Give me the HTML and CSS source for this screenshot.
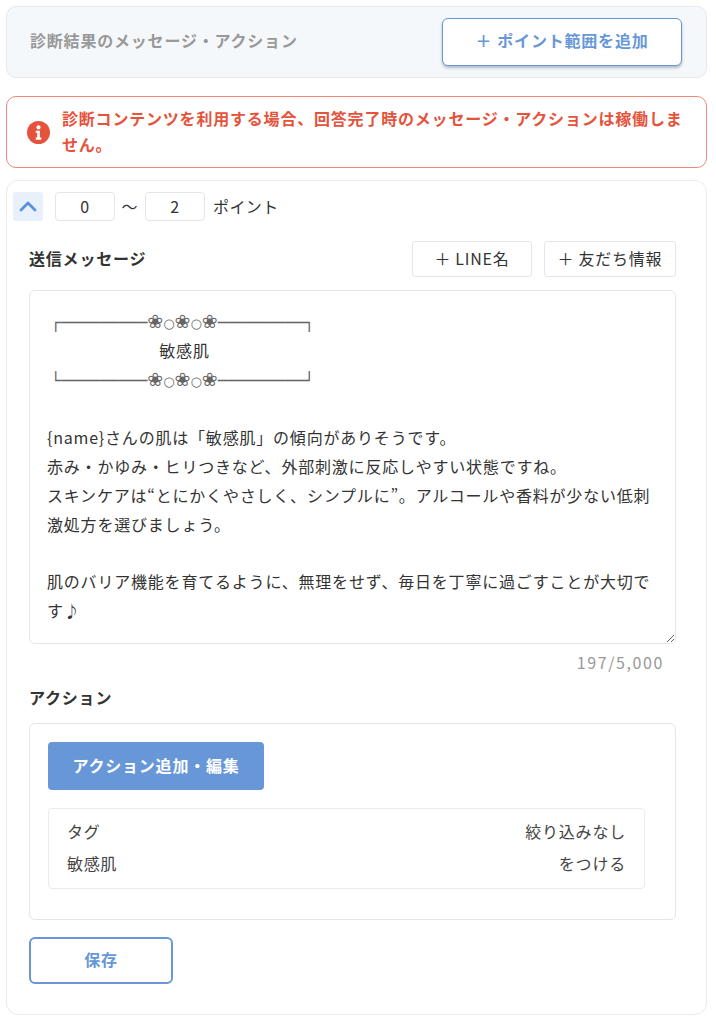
FILE: index.html
```html
<!DOCTYPE html>
<html lang="ja">
<head>
<meta charset="utf-8">
<title>診断結果のメッセージ・アクション</title>
<link rel="stylesheet" href="styles.css">
</head>
<body>
<main class="page">
  <section class="header">
    <h2 class="header-title">診断結果のメッセージ・アクション</h2>
    <button class="add-range" type="button"><span class="plus">＋</span>ポイント範囲を追加</button>
  </section>
  <section class="alert">
    <svg class="alert-icon" viewBox="0 0 20 20" width="23" height="23" aria-hidden="true">
      <circle cx="10" cy="10" r="10" fill="#e5533d"/>
      <circle cx="10" cy="5.6" r="1.8" fill="#fff"/>
      <path d="M7.6 8.4h3.6v6h1.2v1.8H7.6v-1.8h1.2v-4.2H7.6z" fill="#fff"/>
    </svg>
    <p class="alert-text">診断コンテンツを利用する場合、回答完了時のメッセージ・アクションは稼働しません。</p>
  </section>
  <section class="card">
    <div class="range-row">
      <button class="collapse" type="button" aria-label="折りたたむ">
        <svg viewBox="0 0 18 11" width="18" height="11" aria-hidden="true"><path d="M2 9l7-7 7 7" fill="none" stroke="#5b8fd6" stroke-width="2.8" stroke-linecap="round" stroke-linejoin="round"/></svg>
      </button>
      <input class="point" type="text" value="0">
      <span class="tilde">〜</span>
      <input class="point" type="text" value="2">
      <span class="point-label">ポイント</span>
    </div>
    <div class="body">
      <div class="msg-head">
        <h3 class="label">送信メッセージ</h3>
        <div class="chips">
          <button class="chip chip-line" type="button"><span class="chip-plus">＋</span>LINE名</button>
          <button class="chip chip-friend" type="button"><span class="chip-plus">＋</span>友だち情報</button>
        </div>
      </div>
      <div class="message">
        <div class="ornament">┌─────────<span class="flower">❀</span><span class="dot">○</span><span class="flower">❀</span><span class="dot">○</span><span class="flower">❀</span>─────────┐</div>
        <div class="ornament-title">敏感肌</div>
        <div class="ornament">└─────────<span class="flower">❀</span><span class="dot">○</span><span class="flower">❀</span><span class="dot">○</span><span class="flower">❀</span>─────────┘</div>
        <div class="message-text">
{name}さんの肌は「敏感肌」の傾向がありそうです。
赤み・かゆみ・ヒリつきなど、外部刺激に反応しやすい状態ですね。
スキンケアは“とにかくやさしく、シンプルに”。アルコールや香料が少ない低刺激処方を選びましょう。

肌のバリア機能を育てるように、無理をせず、毎日を丁寧に過ごすことが大切です♪</div>
      </div>
      <div class="count">197/5,000</div>
      <h3 class="label action-label">アクション</h3>
      <div class="action-box">
        <button class="action-btn" type="button">アクション追加・編集</button>
        <div class="action-item">
          <div class="action-row"><span>タグ</span><span>絞り込みなし</span></div>
          <div class="action-row"><span>敏感肌</span><span>をつける</span></div>
        </div>
      </div>
      <button class="save" type="button">保存</button>
    </div>
  </section>
</main>
</body>
</html>
```
FILE: styles.css
```css
* { box-sizing: border-box; }
html, body { margin: 0; padding: 0; background: #fff; }
body {
  font-family: "Noto Sans CJK JP", "Noto Sans", sans-serif;
  color: #333;
  font-size: 16px;
  letter-spacing: 0.8px;
}
button, input { font-family: inherit; letter-spacing: inherit; }
h2, h3, p { margin: 0; }
.page {
  padding: 6px 9px 0 6px;
  display: flex;
  flex-direction: column;
}
.header {
  height: 72px;
  background: #f5f8fb;
  border: 1px solid #e6e9ee;
  border-radius: 10px;
  display: flex;
  align-items: center;
  justify-content: space-between;
  padding: 0 24px 0 23px;
}
.header-title {
  font-size: 16px;
  font-weight: 700;
  color: #999;
  padding-bottom: 4px;
}
.add-range {
  width: 240px;
  height: 48px;
  padding: 0 0 4px;
  background: #fff;
  border: 1px solid #6897d8;
  border-radius: 6px;
  box-shadow: 0 2px 3px rgba(60, 70, 90, .35);
  color: #6897d8;
  font-size: 16px;
  font-weight: 700;
}
.plus { margin-right: 5px; }
.alert {
  margin-top: 18px;
  height: 72px;
  border: 1px solid #ec8a7d;
  border-radius: 10px;
  display: flex;
  align-items: center;
  padding: 0 14px 0 20px;
  gap: 12px;
}
.alert-icon { flex: none; }
.alert-text {
  color: #e5533d;
  font-size: 16px;
  font-weight: 700;
  line-height: 26px;
  padding-bottom: 2px;
}
.card {
  margin-top: 12px;
  height: 835px;
  border: 1px solid #e9ebee;
  border-radius: 12px;
  padding: 11px 0 0 6px;
}
.range-row {
  display: flex;
  align-items: center;
  height: 29px;
}
.collapse {
  width: 30px;
  height: 29px;
  padding: 0;
  border: 0;
  border-radius: 3px;
  background: #e8f0fb;
  display: flex;
  align-items: center;
  justify-content: center;
}
.point {
  width: 60px;
  height: 29px;
  border: 1px solid #e4e6ea;
  border-radius: 4px;
  text-align: center;
  font-size: 16px;
  color: #333;
  padding: 0 0 2px;
  margin-left: 12px;
}
.tilde { width: 30px; text-align: center; padding-bottom: 2px; }
.tilde + .point { margin-left: 0; }
.point-label { margin-left: 8px; font-size: 16px; color: #333; padding-bottom: 2px; letter-spacing: 0.4px; }
.body { padding: 0 30px 0 16px; }
.msg-head {
  margin-top: 20px;
  display: flex;
  justify-content: space-between;
  align-items: center;
  height: 36px;
}
.label { font-size: 16px; font-weight: 700; color: #333; padding-bottom: 2px; }
.chips { display: flex; gap: 12px; }
.chip {
  height: 36px;
  background: #fff;
  border: 1px solid #e4e6ea;
  border-radius: 3px;
  font-size: 16px;
  color: #333;
  padding: 0 0 2px;
}
.chip-line { width: 120px; }
.chip-friend { width: 132px; }
.chip-plus { margin-right: 4px; }
.message {
  width: 100%;
  height: 354px;
  margin-top: 13px;
  padding: 18px 20px 18px 17px;
  border: 1px solid #e4e6ea;
  border-radius: 6px;
  font-size: 16px;
  line-height: 28.8px;
  color: #333;
  background: #fff;
  resize: vertical;
  overflow: hidden;
}
.ornament {
  height: 28.8px;
  padding-left: 4px;
  font-family: "DejaVu Sans", sans-serif;
  letter-spacing: 0;
  white-space: nowrap;
  color: #666;
}
.flower { font-size: 19px; line-height: 0; }
.dot { font-size: 13px; line-height: 0; }
.ornament-title {
  width: 275px;
  height: 28.8px;
  line-height: 25px;
  text-align: center;
}
.message-text { white-space: pre-wrap; margin-top: -1px; }
.count {
  text-align: right;
  padding-right: 12px;
  color: #999;
  font-size: 16px;
  line-height: 20px;
  margin-top: 8px;
  letter-spacing: 1.6px;
}
.action-label { margin-top: 13px; line-height: 24px; height: 24px; }
.action-box {
  margin-top: 14px;
  height: 197px;
  border: 1px solid #e4e6ea;
  border-radius: 6px;
  padding: 18px 30px 0 18px;
}
.action-btn {
  display: block;
  width: 216px;
  height: 48px;
  padding: 0 0 3px;
  background: #6897d8;
  border: 0;
  border-radius: 4px;
  color: #fff;
  font-size: 16px;
  font-weight: 700;
}
.action-item {
  margin-top: 18px;
  height: 81px;
  border: 1px solid #e9ebee;
  border-radius: 4px;
  padding: 6px 18px;
}
.action-row {
  display: flex;
  justify-content: space-between;
  height: 32px;
  line-height: 32px;
  font-size: 16px;
  color: #444;
}
.save {
  display: block;
  margin-top: 17px;
  width: 144px;
  height: 47px;
  padding: 0 0 4px;
  background: #fff;
  border: 2px solid #6897d8;
  border-radius: 6px;
  color: #6897d8;
  font-size: 16px;
  font-weight: 700;
}
```
